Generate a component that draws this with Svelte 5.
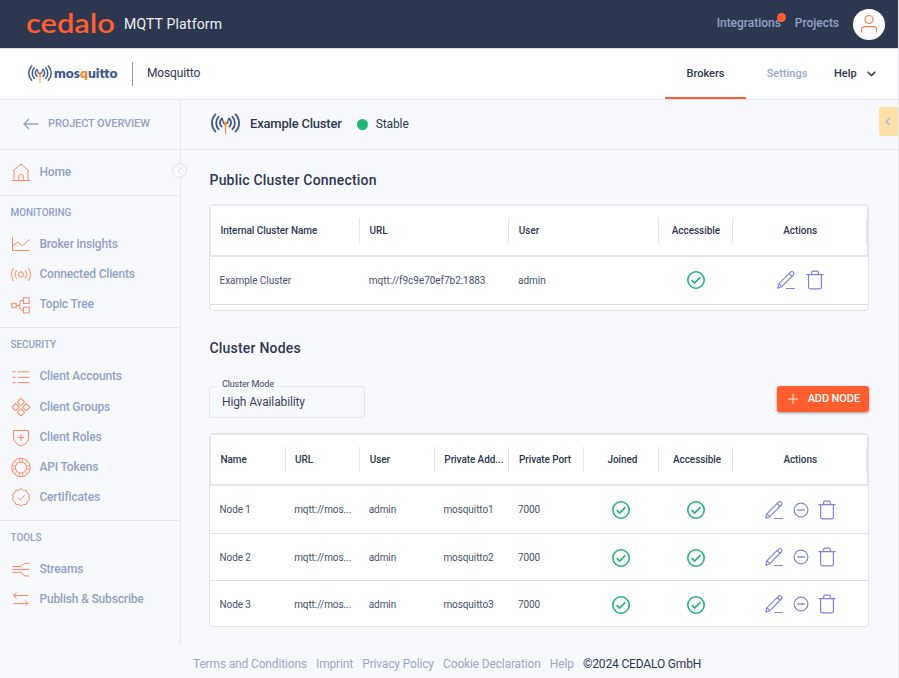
<script>
  const sections = [
    { title: '', items: [{ icon: 'home', label: 'Home' }] },
    {
      title: 'MONITORING',
      items: [
        { icon: 'chart', label: 'Broker insights' },
        { icon: 'signal', label: 'Connected Clients' },
        { icon: 'tree', label: 'Topic Tree' }
      ]
    },
    {
      title: 'SECURITY',
      items: [
        { icon: 'list', label: 'Client Accounts' },
        { icon: 'groups', label: 'Client Groups' },
        { icon: 'shield', label: 'Client Roles' },
        { icon: 'token', label: 'API Tokens' },
        { icon: 'badge', label: 'Certificates' }
      ]
    },
    {
      title: 'TOOLS',
      items: [
        { icon: 'streams', label: 'Streams' },
        { icon: 'swap', label: 'Publish & Subscribe' }
      ]
    }
  ];
  const nodes = [1, 2, 3];
  const footer = ['Terms and Conditions', 'Imprint', 'Privacy Policy', 'Cookie Declaration', 'Help'];
</script>

{#snippet waves(w, h)}
  <svg width={w} height={h} viewBox="0 0 28 21" fill="none" stroke="#40598c" stroke-width="1.8" stroke-linecap="round">
    <path d="M4.3 1.2C-.2 6 -.2 13 4.3 17.8M7.3 3.500C4.2 7 4.2 12 7.3 15.500M10.600 5.200C8 7.600 8 10.900 10.300 13M23.700 1.200C28.200 6 28.200 13 23.700 17.800M20.700 3.500C23.800 7 23.800 12 20.700 15.500M17.400 5.200C20 7.600 20 10.900 17.700 13" />
    <path d="M10.600 5.200C12 6.500 11.500 8 12 10M17.400 5.200C16 6.500 16.500 8 16 10" stroke-width="1.2" />
    <circle cx="14" cy="10" r="1.8" fill="#f5842a" stroke="none" />
    <path d="M13.200 10h1.600l-.4 10.700h-.8z" fill="#f5842a" stroke="none" />
  </svg>
{/snippet}

{#snippet check()}
  <svg class="check" width="20" height="20" viewBox="0 0 20 20" fill="none" stroke="#21b573" stroke-width="1.600">
    <circle cx="10" cy="10" r="8.200" />
    <path d="M5.700 10.200l2.900 2.900 5.700-5.700" stroke-width="1.7" />
  </svg>
{/snippet}

{#snippet pencil()}
  <svg width="20" height="20" viewBox="0 0 20 20" fill="none" stroke="#7f83e0" stroke-width="1.150" stroke-linejoin="round" stroke-linecap="round">
    <path d="M1.800 18.200l1-4.300L14.500 2.200a1.900 1.900 0 0 1 2.800 2.800L5.800 16.700l-4 1.500zM2.900 13.900l2.900 2.700M13.200 3.500l2.700 2.800" />
    <path d="M10.500 18.500h8" />
  </svg>
{/snippet}

{#snippet trash()}
  <svg width="18" height="20" viewBox="0 0 18 20" fill="none" stroke="#7f83e0" stroke-width="1.200" stroke-linecap="round" stroke-linejoin="round">
    <path d="M.8 4.600h16.400M2.600 4.600v12.700a1.500 1.500 0 0 0 1.500 1.500h9.800a1.500 1.500 0 0 0 1.500-1.500V4.600M5.600 4.400V2.700a1.500 1.500 0 0 1 1.500-1.500h3.800a1.500 1.500 0 0 1 1.500 1.500v1.700" />
  </svg>
{/snippet}

{#snippet navIcon(name)}
  <svg class="nicon" width="20" height="20" viewBox="0 0 20 20" fill="none" stroke="#ff8663" stroke-width="1">
    {#if name === 'home'}
      <path d="M.5 18.500h19M3 18.500V8.500M17 18.500V8.500M2 9l8-7 8 7M7.800 18.500v-4.500q0-1.500 1.500-1.500h1.400q1.500 0 1.500 1.500v4.500" />
    {:else if name === 'chart'}
      <path d="M1.500 3v13.500h17M1.500 12.500l5-4.700 5 3.900 7-6.200" />
    {:else if name === 'signal'}
      <circle cx="10" cy="10.500" r="2.700" />
      <path d="M5.700 6.200q-3 4.300 0 8.600M14.300 6.200q3 4.300 0 8.600M2.600 4q-4.200 6.500 0 13M17.400 4q4.200 6.500 0 13" />
    {:else if name === 'tree'}
      <rect x=".8" y="8.300" width="4.400" height="4.400" />
      <rect x="12.500" y="2.700" width="5.700" height="5.700" />
      <rect x="12.500" y="12.200" width="5.700" height="5.700" />
      <path d="M5.200 10.500h3.600M12.500 5.500h-2.200q-1.500 0-1.500 1.500v6.500q0 1.500 1.500 1.500h2.200" />
    {:else if name === 'list'}
      <path d="M1.500 4.800h3M6.500 4.800h12M1.500 10.300h3M6.500 10.300h12M1.500 15.600h3M6.500 15.600h12" />
    {:else if name === 'groups'}
      <rect x="7.400" y="2.200" width="5.200" height="5.200" rx=".6" transform="rotate(45 10 4.800)" />
      <rect x="7.400" y="12.800" width="5.200" height="5.200" rx=".6" transform="rotate(45 10 15.400)" />
      <rect x="2.100" y="7.500" width="5.200" height="5.200" rx=".6" transform="rotate(45 4.700 10.100)" />
      <rect x="12.700" y="7.500" width="5.200" height="5.200" rx=".6" transform="rotate(45 15.300 10.100)" />
    {:else if name === 'shield'}
      <path d="M2.500 3.500h15v6.500q0 6.500-7.500 9-7.500-2.500-7.500-9zM10 7.300v6.500M6.700 10.500h6.600" />
    {:else if name === 'token'}
      <circle cx="10" cy="10.500" r="9.200" />
      <circle cx="10" cy="10.500" r="5.600" />
      <path d="M8.500 1.500v3.800M11.500 1.500v3.800M8.500 15.700v3.800M11.500 15.700v3.800M1 9h3.800M1 12h3.800M15.200 9H19M15.200 12H19M3.500 4l2.700 2.700M16.500 4l-2.700 2.700M3.500 17l2.700-2.700M16.500 17l-2.700-2.700" stroke-width=".75" />
    {:else if name === 'badge'}
      <path d="M10 1.600Q12 4 15.200 3.200Q15.400 6.200 18.500 7.500Q17 10.300 18.500 13Q15.500 14.200 15.200 17.400Q12 16.800 10 19Q8 16.800 4.800 17.400Q4.500 14.200 1.500 13Q3 10.300 1.500 7.500Q4.600 6.200 4.800 3.200Q8 4 10 1.600zM6.800 10.500l2.300 2.300 4.500-4.500" stroke-linejoin="round" />
    {:else if name === 'streams'}
      <path d="M1.500 7.500h8.200c1.800 0 2.500-3.200 4.500-3.200h4M1.500 10.500h17M1.500 13.400h8.200c1.800 0 2.500 3.600 4.500 3.600h4" />
    {:else if name === 'swap'}
      <path d="M17 6.500H2.500M5.500 3.500l-3 3 3 3M2.500 14.500H17M14 11.500l3 3-3 3" />
    {/if}
  </svg>
{/snippet}

<div class="page">
  <header class="top">
    <svg class="cedalo" width="92" height="30" viewBox="0 0 92 30">
      <text x="0" y="24.500" textLength="89" lengthAdjust="spacingAndGlyphs">cedalo</text>
    </svg>
    <span class="platform">MQTT Platform</span>
    <nav>
      <span class="integr">Integrations<i></i></span>
      <span>Projects</span>
      <div class="avatar">
        <svg width="18" height="20" viewBox="0 0 18 20" fill="none" stroke="#ff7a52" stroke-width="1.200">
          <circle cx="9" cy="5.500" r="4" />
          <path d="M1.500 18.500v-2q0-3.800 3.500-3.800h8q3.500 0 3.500 3.800v2" />
        </svg>
      </div>
    </nav>
  </header>

  <div class="sub">
    <div class="mlogo">
      {@render waves(24, 18)}
      <svg class="mtext" width="65" height="18" viewBox="0 0 65 18">
        <text x="0" y="13" textLength="63.500" lengthAdjust="spacingAndGlyphs">mos<tspan fill="#f5842a">q</tspan>uitto</text>
      </svg>
    </div>
    <span class="product">Mosquitto</span>
    <div class="tabs">
      <span class="tab on">Brokers</span>
      <span class="tab set">Settings</span>
      <span class="tab help">Help
        <svg width="9" height="6" viewBox="0 0 9 6" fill="none" stroke="#2e3750" stroke-width="1.500"><path d="M.7.8l3.800 3.800L8.300.8" /></svg>
      </span>
    </div>
  </div>

  <div class="body">
    <aside>
      <div class="back">
        <svg width="16" height="12" viewBox="0 0 16 12" fill="none" stroke="#93a1c6" stroke-width="1.300"><path d="M15.500 6H1M6 1L1 6l5 5" /></svg>
        <span>PROJECT OVERVIEW</span>
      </div>
      {#each sections as s}
        <section class:first={!s.title}>
          {#if s.title}<h4>{s.title}</h4>{/if}
          {#each s.items as it}
            <div class="item">{@render navIcon(it.icon)}<span>{it.label}</span></div>
          {/each}
        </section>
      {/each}
      <div class="collapse">
        <svg width="5" height="8" viewBox="0 0 5 8" fill="none" stroke="#d9dbe4" stroke-width="1"><path d="M4.500.5L1 4l3.500 3.500" /></svg>
      </div>
    </aside>

    <main>
      <div class="crumb">
        {@render waves(29, 22)}
        <b>Example Cluster</b><i></i><span>Stable</span>
      </div>
      <div class="content">
        <h2>Public Cluster Connection</h2>
        <div class="table t1">
          <div class="row head">
            <span>Internal Cluster Name</span><span>URL</span><span>User</span><span class="c">Accessible</span><span class="c">Actions</span>
          </div>
          <div class="row">
            <span>Example Cluster</span><span>mqtt://f9c9e70ef7b2:1883</span><span>admin</span>
            <span class="c">{@render check()}</span>
            <span class="c act wide">{@render pencil()}{@render trash()}</span>
          </div>
        </div>

        <h2 class="second">Cluster Nodes</h2>
        <div class="tools">
          <div class="field"><label for="mode">Cluster Mode</label><span id="mode">High Availability</span></div>
          <button>
            <svg width="10" height="10" viewBox="0 0 10 10" stroke="#ffe4dc" stroke-width="1.200"><path d="M5 0v10M0 5h10" /></svg>
            ADD NODE
          </button>
        </div>
        <div class="table t2">
          <div class="row head">
            <span>Name</span><span>URL</span><span>User</span><span>Private Add...</span><span>Private Port</span><span class="c">Joined</span><span class="c">Accessible</span><span class="c">Actions</span>
          </div>
          {#each nodes as n}
            <div class="row">
              <span>Node {n}</span><span>mqtt://mos...</span><span>admin</span><span>mosquitto{n}</span><span>7000</span>
              <span class="c">{@render check()}</span>
              <span class="c">{@render check()}</span>
              <span class="c act">
                {@render pencil()}
                <svg width="16" height="16" viewBox="0 0 16 16" fill="none" stroke="#7f83e0" stroke-width="1.200"><circle cx="8" cy="8" r="6.900" /><path d="M4.300 8h7.400" stroke-width="1.400" /></svg>
                {@render trash()}
              </span>
            </div>
          {/each}
        </div>
      </div>
    </main>
    <div class="drawer">
      <svg width="6" height="9" viewBox="0 0 6 9" fill="none" stroke="#b9b5e2" stroke-width="1.600"><path d="M5 .7L1.300 4.500 5 8.300" /></svg>
    </div>
  </div>

  <footer>
    {#each footer as f}<span>{f}</span>{/each}<strong>©2024 CEDALO GmbH</strong>
  </footer>
</div>

<style>
  :global(body) { margin: 0; background: #f8f9fd; overflow: hidden; }
  .page {
    box-sizing: border-box; width: 899px; height: 678px; display: flex; flex-direction: column;
    border-right: 1px solid #e9eaee; background: #f8f9fd; color: #2e3750;
    font-family: Roboto, sans-serif; font-size: 12px; overflow: hidden;
  }
  svg { flex: none; display: block; }
  .top { box-sizing: border-box; height: 49px; background: #2e3750; border-bottom: 1px solid #d9dbe0; display: flex; align-items: center; padding: 0 13px 0 26px; flex: none; }
  .cedalo { margin-top: -2px; overflow: visible; }
  .cedalo text { font: 600 27px Lato, sans-serif; fill: #ff5f2e; }
  .platform { margin-left: 6px; color: #eef0f5; font-size: 14px; letter-spacing: .18px; }
  .top nav { margin-left: auto; display: flex; align-items: center; color: #93a1c6; font-weight: 500; font-size: 12px; letter-spacing: -.03px; }
  .top nav span { margin-right: 14px; position: relative; top: -1px; }
  .integr i { position: absolute; width: 9px; height: 9px; border-radius: 50%; background: #ff5f2e; right: -5px; top: -3px; }
  .avatar { width: 32px; height: 31px; border-radius: 50%; background: #fff; display: flex; align-items: center; justify-content: center; }
  .sub { box-sizing: border-box; height: 51px; background: #fff; border-bottom: 1px solid #e5e7ec; display: flex; align-items: center; flex: none; padding-left: 28px; }
  .mlogo { display: flex; align-items: center; height: 24px; border-right: 1px solid #8e9dc2; width: 104px; gap: 2px; }
  .mtext { overflow: visible; }
  .mtext text { font: 800 12.500px Lato, sans-serif; fill: #40598c; }
  .product { margin-left: 14px; font-size: 12px; letter-spacing: -.14px; padding-bottom: 2px; }
  .tabs { margin-left: auto; display: flex; height: 50px; line-height: 49px; font-weight: 500; font-size: 11px; }
  .on { box-sizing: border-box; width: 81px; text-align: center; border-bottom: 2px solid #ff5f2e; }
  .set { width: 82px; text-align: center; color: #9aa7ca; }
  .help { display: flex; align-items: center; gap: 10px; width: 64px; height: 49px; padding-left: 6px; }
  .body { display: flex; height: 545px; flex: none; position: relative; }
  aside { box-sizing: border-box; width: 181px; border-right: 1px solid #e5e7ec; position: relative; color: #93a1c6; font-weight: 500; flex: none; }
  .back { box-sizing: border-box; height: 50px; display: flex; align-items: center; gap: 9px; padding: 0 0 2px 23px; border-bottom: 1px solid #e5e7ec; font-size: 11px; letter-spacing: -.13px; }
  section { box-sizing: border-box; border-bottom: 1px solid #e5e7ec; padding: 9px 0 6.700px 10.500px; }
  section:last-of-type { border: 0; }
  section.first { padding: 7px 0 8px 10.500px; }
  h4 { margin: 0 0 9.700px; font-size: 10px; line-height: 15.300px; font-weight: 500; letter-spacing: -.05px; }
  .item { display: flex; align-items: center; gap: 8.900px; height: 30.200px; letter-spacing: -.16px; }
  .item svg { margin-top: -2px; }
  .item span { position: relative; top: -1.200px; }
  .first .item span { top: 0; }
  .first .item svg { margin-top: 0; }
  .collapse { position: absolute; right: -7px; top: 63px; width: 13px; height: 13px; border: 1px solid #e2e4ea; border-radius: 50%; background: #f8f9fd; display: flex; align-items: center; justify-content: center; }
  main { flex: 1; min-width: 0; }
  .crumb { box-sizing: border-box; height: 50px; border-bottom: 1px solid #e5e7ec; display: flex; align-items: center; padding: 0 0 2px 29.500px; font-size: 12px; }
  .crumb b { margin-left: 10.500px; font-weight: 500; font-size: 13px; letter-spacing: -.2px; }
  .crumb i { width: 11px; height: 11px; border-radius: 50%; background: #21b573; margin: 1px 8px 0 15px; }
  .crumb span { letter-spacing: -.1px; }
  .content { padding: 20px 29px 0 28px; }
  h2 { margin: 0 0 12.500px .500px; font-size: 14px; line-height: 21px; font-weight: 500; letter-spacing: .2px; }
  h2.second { margin: 27px 0 27px .500px; }
  .table { box-sizing: border-box; border: 1px solid #e2e4ea; border-radius: 4px; background: #fff; overflow: hidden; width: 660px; font-size: 10px; }
  .t1 { height: 107.500px; }
  .t2 { height: 194px; margin-top: 15px; }
  .row { box-sizing: border-box; display: grid; align-items: center; height: 48px; border-bottom: 1px solid #dcdee3; color: #48516a; }
  .t1 .row { grid-template-columns: 149.300px 149.300px 149.300px 74.700px 1fr; }
  .t2 .row { grid-template-columns: repeat(7, 74.640px) 1fr; height: 47px; }
  .t2 .row:nth-child(2) { height: 48px; }
  .t2 .row:last-child { border: 0; height: 46px; }
  .row span { padding: 0 0 0 9.500px; white-space: nowrap; letter-spacing: -.04px; }
  .t2 span { letter-spacing: -.08px; }
  .row.head, .t2 .row.head { height: 52px; border: solid #e5e7ec; border-width: 1px 1px 2px; color: #2e3750; font-weight: 500; }
  .t1 .row.head { grid-template-columns: 149px 149.300px 149.300px 74.700px 1fr; }
  .t2 .row.head { grid-template-columns: 74.600px repeat(6, 74.640px) 1fr; }
  .head span { border-right: 1px solid #e2e4ea; line-height: 25px; }
  .row .c { display: flex; align-items: center; justify-content: center; padding: 0 0 0 1px; }
  .t2 .head .c:not(:last-child) { padding-left: 3px; }
  .t2 .check { margin-top: 1px; }
  .row .act { gap: 9px; padding: 0 1px 0 0; }
  .row .act.wide { gap: 10px; }
  .tools { display: flex; justify-content: space-between; height: 32px; width: 660px; }
  .field { box-sizing: border-box; width: 156px; height: 32px; border: 1px solid #e2e4ea; border-radius: 3px; padding-left: 12px; line-height: 30px; font-size: 12px; letter-spacing: -.13px; position: relative; color: #3c455c; }
  .field label { position: absolute; left: 7px; top: -9px; padding: 0 5px; background: #f8f9fd; font-size: 9px; line-height: 12px; letter-spacing: -.13px; }
  button { box-sizing: border-box; width: 92px; height: 26px; border: 0; border-radius: 3px; background: #ff5f2e; color: #fff; font: 500 11px Roboto, sans-serif; letter-spacing: -.1px; padding: 0 9px 1px 11px; display: flex; align-items: center; justify-content: space-between; box-shadow: 0 1px 3px rgba(0,0,0,.4); }
  .drawer { box-sizing: border-box; position: absolute; right: 0; top: 7px; width: 19px; height: 29px; padding-right: 2px; border-radius: 3px 0 0 3px; background: #ffe0a6; display: flex; align-items: center; justify-content: center; }
  footer { display: flex; gap: 9.200px; padding: 11px 0 0 193px; color: #9aa7ca; font-size: 12px; line-height: 16px; white-space: nowrap; letter-spacing: -.16px; }
  footer strong { color: #2e3750; font-weight: 400; }
</style>
